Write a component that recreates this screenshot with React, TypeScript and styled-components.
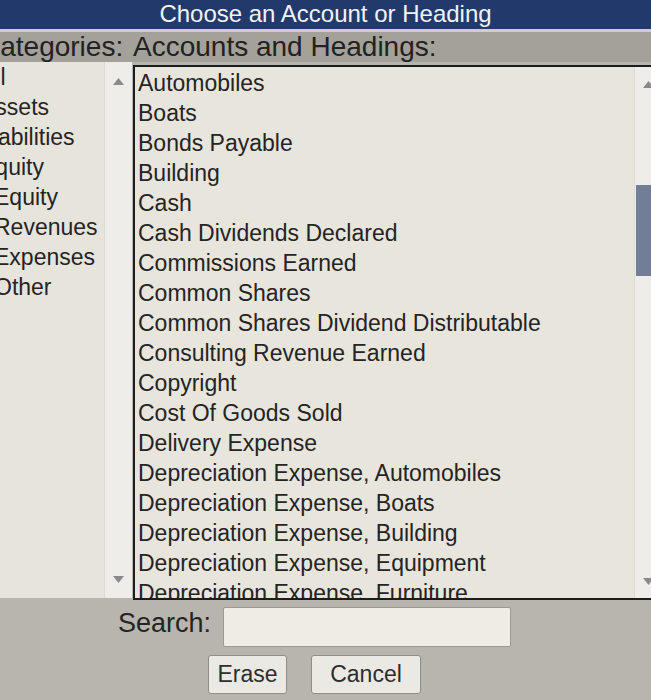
import React, { FC } from "react";
import styled, { createGlobalStyle } from "styled-components";

const GlobalStyle = createGlobalStyle`
  body {
    margin: 0;
    background: #b7b5ae;
  }
`;

const Page = styled.div`
  width: 651px;
  height: 700px;
  overflow: hidden;
  display: flex;
  flex-direction: column;
  background: #b7b5ae;
  font-family: "Liberation Sans", Arial, sans-serif;
  color: #242424;
`;

const TitleBar = styled.div`
  height: 29px;
  line-height: 27px;
  font-size: 24px;
  text-align: center;
  color: #f2f3f6;
  background: #223a6b;
  border-bottom: 3px solid #cfcdc6;
  white-space: nowrap;
`;

const HeadingRow = styled.div`
  display: grid;
  grid-template-columns: 153px 1fr;
  margin-left: -20px;
  height: 30px;
  line-height: 30px;
  font-size: 28px;
  color: #222;
  background: #a3a19a;
  white-space: nowrap;
`;

const Body = styled.div`
  display: flex;
  align-items: flex-start;
  margin-left: -20px;
  height: 538px;
`;

const LeftPanel = styled.div`
  display: flex;
  width: 152px;
  height: 536px;
  background: #e7e4dc;
`;

const CategoryList = styled.div`
  flex: 1;
  overflow: hidden;
  font-size: 23px;
  line-height: 30px;
  white-space: nowrap;
`;

const Category = styled.div<{ $indent: number }>`
  padding-left: ${(p) => p.$indent}px;
`;

const RightPanel = styled.div`
  display: flex;
  flex: 1;
  height: 531px;
  margin: 3px -10px 0 1px;
  background: #e8e5dd;
  border: 2px solid #1c1c1c;
  border-right: none;
`;

const AccountList = styled.div`
  flex: 1;
  overflow: hidden;
  padding: 1px 0 0 3px;
  font-size: 23px;
  line-height: 30px;
  white-space: nowrap;
`;

const Scrollbar = styled.div<{ $width: number }>`
  display: flex;
  flex-direction: column;
  width: ${(p) => p.$width}px;
  background: #eeede9;
  border-left: 1px solid #dcdad4;
`;

const ScrollArrow = styled.div<{ $height: number }>`
  display: flex;
  align-items: center;
  justify-content: center;
  height: ${(p) => p.$height}px;
  flex-shrink: 0;
`;

const Track = styled.div`
  flex: 1;
`;

const Thumb = styled.div<{ $top: number; $height: number }>`
  margin: ${(p) => p.$top}px 1px 0 1px;
  height: ${(p) => p.$height}px;
  background: #727d98;
`;

const Footer = styled.div`
  display: flex;
  flex-direction: column;
`;

const SearchRow = styled.div`
  display: flex;
  align-items: center;
  gap: 12px;
  margin-top: 7px;
  padding-left: 118px;
`;

const SearchLabel = styled.label`
  font-size: 27px;
  line-height: 30px;
  margin-bottom: 8px;
  color: #242424;
`;

const SearchInput = styled.input`
  width: 288px;
  height: 40px;
  box-sizing: border-box;
  background: #efece4;
  border: 1px solid #9b9992;
  border-radius: 2px;
  outline: none;
  font-family: inherit;
  font-size: 22px;
`;

const ButtonRow = styled.div`
  display: flex;
  gap: 24px;
  margin-top: 8px;
  padding-left: 208px;
`;

const Button = styled.button<{ $width: number }>`
  width: ${(p) => p.$width}px;
  height: 39px;
  padding: 0;
  background: #ebe9e3;
  border: 1px solid #8f8d87;
  border-radius: 3px;
  font-family: inherit;
  font-size: 23px;
  color: #2d2d2d;
`;

const Arrow: FC<{ down?: boolean }> = ({ down }) => (
  <svg width="11" height="7" viewBox="0 0 11 7">
    <path d={down ? "M0 0 L11 0 L5.5 7 Z" : "M0 7 L11 7 L5.5 0 Z"} fill="#8a8a8c" />
  </svg>
);

const categories = [
  { label: "All", indent: 0 },
  { label: "Assets", indent: 0 },
  { label: "Liabilities", indent: 0 },
  { label: "Equity", indent: 0 },
  { label: "Equity", indent: 14 },
  { label: "Revenues", indent: 14 },
  { label: "Expenses", indent: 14 },
  { label: "Other", indent: 14 },
];

const accounts = [
  "Automobiles",
  "Boats",
  "Bonds Payable",
  "Building",
  "Cash",
  "Cash Dividends Declared",
  "Commissions Earned",
  "Common Shares",
  "Common Shares Dividend Distributable",
  "Consulting Revenue Earned",
  "Copyright",
  "Cost Of Goods Sold",
  "Delivery Expense",
  "Depreciation Expense, Automobiles",
  "Depreciation Expense, Boats",
  "Depreciation Expense, Building",
  "Depreciation Expense, Equipment",
  "Depreciation Expense, Furniture",
  "Depreciation Expense, Machinery",
];

const App: FC = () => {
  return (
    <>
      <GlobalStyle />
      <Page>
        <TitleBar>Choose an Account or Heading</TitleBar>
        <HeadingRow>
          <span>Categories:</span>
          <span>Accounts and Headings:</span>
        </HeadingRow>
        <Body>
          <LeftPanel>
            <CategoryList>
              {categories.map((c, i) => (
                <Category key={i} $indent={c.indent}>
                  {c.label}
                </Category>
              ))}
            </CategoryList>
            <Scrollbar $width={27}>
              <ScrollArrow $height={38}>
                <Arrow />
              </ScrollArrow>
              <Track />
              <ScrollArrow $height={38}>
                <Arrow down />
              </ScrollArrow>
            </Scrollbar>
          </LeftPanel>
          <RightPanel>
            <AccountList>
              {accounts.map((a) => (
                <div key={a}>{a}</div>
              ))}
            </AccountList>
            <Scrollbar $width={26}>
              <ScrollArrow $height={34}>
                <Arrow />
              </ScrollArrow>
              <Track>
                <Thumb $top={84} $height={91} />
              </Track>
              <ScrollArrow $height={34}>
                <Arrow down />
              </ScrollArrow>
            </Scrollbar>
          </RightPanel>
        </Body>
        <Footer>
          <SearchRow>
            <SearchLabel htmlFor="search">Search:</SearchLabel>
            <SearchInput id="search" type="text" />
          </SearchRow>
          <ButtonRow>
            <Button $width={79}>Erase</Button>
            <Button $width={110}>Cancel</Button>
          </ButtonRow>
        </Footer>
      </Page>
    </>
  );
};

export default App;
